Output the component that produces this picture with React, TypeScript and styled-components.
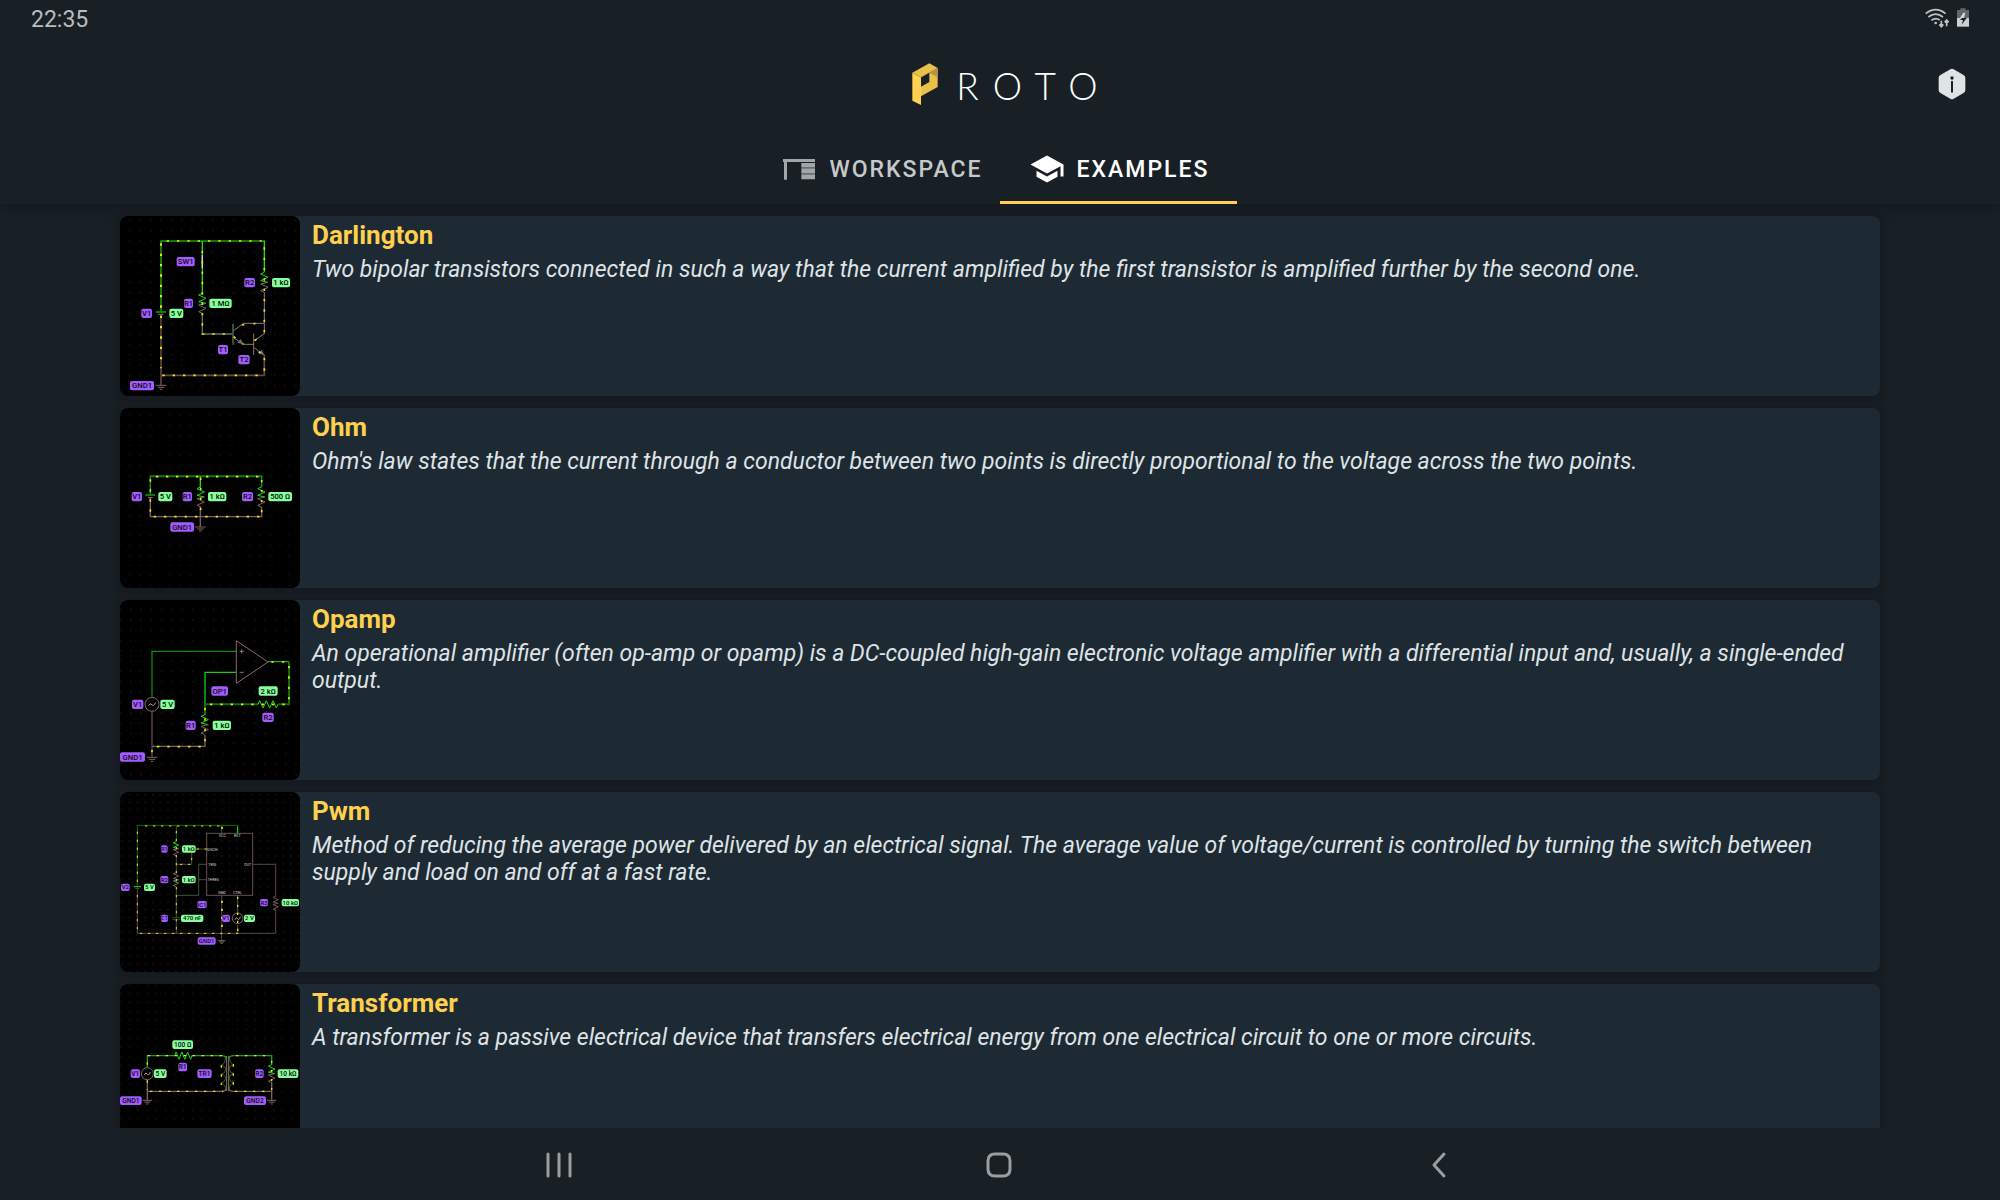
import React from "react";
import styled, { createGlobalStyle } from "styled-components";

const GlobalStyle = createGlobalStyle`
  * { box-sizing: border-box; }
  body { margin: 0; background: #181f25; }
  button { font: inherit; color: inherit; background: none; border: 0; padding: 0; }
`;

const Screen = styled.div`
  display: flex;
  flex-direction: column;
  height: 100vh;
  background: #181f25;
  color: #dfe3e6;
  font-family: Roboto, sans-serif;
`;

const StatusBar = styled.div`
  display: flex;
  align-items: center;
  justify-content: space-between;
  height: 36px;
  padding: 0 31px;
  font-size: 23px;
  color: #babcbe;
`;

const Clock = styled.span`
  padding-top: 4px;
  line-height: 36px;
`;

const StatusIcons = styled.div`
  display: flex;
  gap: 8px;
`;

const Header = styled.header`
  position: relative;
  z-index: 1;
  display: flex;
  flex-direction: column;
  background: #181f25;
  box-shadow: 0 2px 10px rgba(20, 16, 28, 0.4);
`;

const Toolbar = styled.div`
  display: grid;
  grid-template-columns: 1fr auto 1fr;
  align-items: center;
  height: 96px;
  padding: 0 30px;
`;

const Brand = styled.h1`
  grid-column: 2;
  display: flex;
  align-items: center;
  gap: 18px;
  margin: 0;
  padding-left: 24px;
  font-weight: 400;
`;

const Wordmark = styled.span`
  padding-top: 4px;
  font-family: Lato, sans-serif;
  font-size: 37px;
  font-weight: 300;
  line-height: 44px;
  letter-spacing: 14px;
  color: #fff;
`;

const InfoButton = styled.button`
  justify-self: end;
  width: 36px;
  height: 36px;
`;

const Tabs = styled.nav`
  display: grid;
  grid-template-columns: 237px 237px;
  justify-content: center;
  height: 72px;
`;

const Tab = styled.button<{ $active?: boolean }>`
  display: flex;
  align-items: center;
  justify-content: center;
  gap: 12px;
  padding: 4px 0 0 1px;
  border-bottom: 3px solid ${(p) => (p.$active ? "#ffd04d" : "transparent")};
  color: ${(p) => (p.$active ? "#ffffff" : "#c6c8ca")};
  font-size: 23px;
  font-weight: 500;
  letter-spacing: 2px;
`;

const TabLabel = styled.span`
  padding-top: 2px;
  line-height: 28px;
`;

const List = styled.main`
  display: flex;
  flex-direction: column;
  gap: 12px;
  flex: 1;
  min-height: 0;
  padding: 12px 6%;
  overflow: hidden auto;
  scrollbar-width: none;
`;

const Card = styled.article`
  display: flex;
  flex: none;
  height: 180px;
  border-radius: 8px;
  background: #1d2a34;
  box-shadow: 0 2px 8px rgba(20, 14, 26, 0.5);
`;

const Thumb = styled.svg`
  flex: none;
  width: 180px;
  height: 180px;
  border-radius: 8px;
  background: #000;
`;

const CardBody = styled.div`
  padding: 3px 12px;
`;

const Title = styled.h2`
  margin: 0;
  font-size: 26px;
  font-weight: 700;
  line-height: 32px;
  color: #ffd04d;
`;

const Description = styled.p`
  margin: 5px 0 0;
  font-size: 23px;
  font-style: italic;
  line-height: 27px;
  color: #dfe3e6;
`;

const NavBar = styled.footer`
  display: grid;
  grid-template-columns: repeat(3, 440px);
  justify-content: center;
  height: 72px;
  padding: 2px 2px 0 0;
`;

const NavButton = styled.button`
  display: flex;
  align-items: center;
  justify-content: center;
`;

/* ---------- circuit drawing parts ---------- */

const HOT = "#12b312";
const LIME = "#16e016";
const COLD = "#7d6060";
const DIM = "#56704f";

const Wire = ({ d, c = HOT, w = 4 }: { d: string; c?: string; w?: number }) => (
  <path d={d} fill="none" stroke={c} strokeWidth={w} />
);

const Flow = ({ d, gap = 31, at = 0, w = 5 }: { d: string; gap?: number; at?: number; w?: number }) => (
  <path d={d} fill="none" stroke="#f0e600" strokeWidth={w} strokeDasharray={`7 ${gap - 7}`} strokeDashoffset={-at} />
);

type ChipProps = { x: number; y: number; w: number; t: string; v?: boolean; h?: number; s?: number };
const Chip = ({ x, y, w, t, v, h = 28, s = 23 }: ChipProps) => (
  <g>
    <rect x={x} y={y - h / 2} width={w} height={h} rx={6} fill={v ? "#86ff9b" : "#a35cff"} />
    <text x={x + w / 2} y={y + s * 0.36} fontSize={s} fontWeight={500} textAnchor="middle" fill="#0c0c0c" fontFamily="Roboto, sans-serif">
      {t}
    </text>
  </g>
);

/* A vertical zigzag, live colour on its upper half and return colour on its lower half. */
const Resistor = ({ x, y, h = 60, a = 11, top = LIME, low = COLD }: { x: number; y: number; h?: number; a?: number; top?: string; low?: string }) => {
  const s = h / 12;
  return (
    <g>
      <Wire c={top} w={3} d={`M${x} ${y}l${-a} ${s}l${a * 2} ${s * 2}l${-a * 2} ${s * 2}l${a * 2} ${s}`} />
      <Wire c={low} w={3} d={`M${x + a} ${y + s * 6}l${-a * 2} ${s}l${a * 2} ${s * 2}l${-a * 2} ${s * 2}l${a} ${s}`} />
    </g>
  );
};

const FlatResistor = ({ x, y, w = 60 }: { x: number; y: number; w?: number }) => {
  const s = w / 12;
  return <Wire c={LIME} w={3} d={`M${x} ${y}l${s} -11l${s * 2} 22l${s * 2} -22l${s * 2} 22l${s * 2} -22l${s * 2} 22l${s} -11`} />;
};

const Ground = ({ x, y, k = 1 }: { x: number; y: number; k?: number }) => (
  <path
    d={`M${x - 16 * k} ${y}h${32 * k}M${x - 10 * k} ${y + 6 * k}h${20 * k}M${x - 4 * k} ${y + 12 * k}h${8 * k}`}
    stroke="#7d6460"
    strokeWidth={3}
  />
);

const Source = ({ x, y, r }: { x: number; y: number; r: number }) => (
  <g fill="none" stroke="#7d6868" strokeWidth={3}>
    <circle cx={x} cy={y} r={r} fill="#000" />
    <path d={`M${x - r / 2} ${y + 4}q${r / 4} -10 ${r / 2} -3t${r / 2} -6`} stroke="#b5a79d" />
  </g>
);

const Board = ({ id, top, pitch, x0, y0, label, children }: { id: string; top: number; pitch: number; x0: number; y0: number; label: string; children: React.ReactNode }) => (
  <Thumb viewBox={`30 ${top} 540 540`} role="img" aria-label={label}>
    <defs>
      <pattern id={id} x={x0 - 2} y={y0 - 2} width={pitch} height={pitch} patternUnits="userSpaceOnUse">
        <rect width={4} height={4} fill="#181818" />
      </pattern>
    </defs>
    <rect x={30} y={top} width={540} height={540} fill={`url(#${id})`} />
    {children}
  </Thumb>
);

const Darlington = () => (
  <Board id="g1" top={33} pitch={31} x0={60} y0={46} label="Darlington circuit">
    <Wire d="M153 320V108" c="#0b7d0b" w={6} />
    <Wire d="M151 108H464" c="#10a010" w={5} />
    <Wire d="M277 108V265M463 108V200" c={LIME} />
    <Wire d="M277 150V190" c="#d8d8e8" w={4} />
    <Wire d="M138 321H168" c="#10a010" w={5} />
    <Wire d="M145 328H160" c={COLD} />
    <Wire d="M153 330V540" c="#4c3a38" w={6} />
    <Wire d="M153 511H463V450" c="#654746" w={5} />
    <Wire d="M277 325V387H369" c="#5d7a5a" />
    <Wire d="M369 357V419" c="#3c4f3a" w={6} />
    <Wire d="M371 377L400 355H463V262M371 398L400 418H431M463 355V386L431 408" c="#8a8080" w={3} />
    <Wire d="M431 386V449M431 427L463 450" c="#8a7470" w={3} />
    <path d="M382 413L400 418L392 402ZM446 446L463 450L455 434Z" fill="#77706e" />
    <Resistor x={277} y={265} low="#6e706c" />
    <Resistor x={463} y={202} low="#6e706c" />
    <Flow d="M153 115V490" w={6} />
    <Flow d="M170 108H455" />
    <Flow d="M277 138V387H345" />
    <Flow d="M463 127V385" />
    <Flow d="M157 511H455" />
    <Flow d="M463 500V450" at={3} />
    <Flow d="M371 395L400 418" gap={34} />
    <Flow d="M396 360L440 355" gap={34} />
    <Flow d="M440 403L431 408M446 440L463 450" gap={34} />
    <Ground x={153} y={541} />
    <Chip x={200} y={170} w={54} t="SW1" />
    <Chip x={222} y={295} w={27} t="R1" />
    <Chip x={403} y={233} w={32} t="R2" />
    <Chip x={94} y={325} w={32} t="V1" />
    <Chip x={324} y={434} w={30} t="T1" />
    <Chip x={385} y={464} w={34} t="T2" />
    <Chip x={60} y={542} w={72} t="GND1" />
    <Chip v x={178} y={325} w={42} t="5 V" />
    <Chip v x={298} y={295} w={67} t="1 MΩ" />
    <Chip v x={486} y={233} w={54} t="1 kΩ" />
  </Board>
);

const Ohm = () => (
  <Board id="g2" top={24} pitch={30} x0={60} y0={46} label="Ohm circuit">
    <Wire d="M119 229H457" c="#0b7d0b" w={6} />
    <Wire d="M121 229V284M106 285H135M455 229V262" c="#10a010" />
    <Wire d="M271 229V262" c={LIME} />
    <Wire d="M114 293H128M121 293V350H455V320M271 320V380" c={COLD} />
    <Resistor x={272} y={261} />
    <Resistor x={454} y={261} />
    <Flow d="M138 230H450" gap={30} />
    <Flow d="M131 350H450" gap={31} />
    <Flow d="M121 238V345" gap={30} />
    <Flow d="M272 233V340" gap={30} />
    <Flow d="M455 240V340" gap={30} />
    <Ground x={271} y={381} />
    <Chip x={65} y={290} w={31} t="V1" />
    <Chip x={218} y={290} w={28} t="R1" />
    <Chip x={396} y={290} w={33} t="R2" />
    <Chip x={181} y={381} w={71} t="GND1" />
    <Chip v x={145} y={290} w={42} t="5 V" />
    <Chip v x={294} y={290} w={55} t="1 kΩ" />
    <Chip v x={475} y={290} w={71} t="500 Ω" />
  </Board>
);

const Opamp = () => (
  <Board id="g3" top={30} pitch={31} x0={62} y0={58} label="Opamp circuit">
    <Wire d="M126 320V184H379" c="#108a10" />
    <Wire d="M285 342V247H379" c="#18c818" />
    <Wire d="M285 342V375M474 215H537" c="#18b018" />
    <Wire d="M285 343H445M505 343H537V215" c="#0b700b" w={6} />
    <path d="M379 152V280L474 216Z" fill="none" stroke="#8a6c68" strokeWidth={3} />
    <path d="M389 184h12M395 178v12M389 247h12" stroke="#8a7c78" strokeWidth={3} />
    <Wire d="M126 364V500" c="#4c3a38" w={5} />
    <Wire d="M126 469H285V435" c={COLD} />
    <Resistor x={284} y={374} />
    <FlatResistor x={444} y={343} />
    <Source x={126} y={343} r={21} />
    <Flow d="M484 216H530" gap={32} />
    <Flow d="M537 228V330" />
    <Flow d="M300 343H545" />
    <Flow d="M285 354V460" />
    <Flow d="M141 470H280" />
    <Flow d="M126 480V490" />
    <Ground x={126} y={502} />
    <Chip x={304} y={303} w={50} t="OP1" />
    <Chip x={66} y={343} w={34} t="V1" />
    <Chip x={227} y={406} w={30} t="R1" />
    <Chip x={457} y={382} w={34} t="R2" />
    <Chip x={30} y={501} w={75} t="GND1" />
    <Chip v x={151} y={343} w={43} t="5 V" />
    <Chip v x={446} y={303} w={57} t="2 kΩ" />
    <Chip v x={308} y={406} w={55} t="1 kΩ" />
  </Board>
);

const Pin = ({ x, y, t }: { x: number; y: number; t: string }) => (
  <text x={x} y={y} fontSize={11} textAnchor="middle" fill="#dadada" fontFamily="Roboto, sans-serif">
    {t}
  </text>
);

const Pwm = () => (
  <Board id="g4" top={21} pitch={23} x0={59} y0={52} label="Pwm circuit">
    <Wire d="M82 305V121H383V146M199 121V170M335 121V146" c="#0b6e0b" w={3} />
    <Wire d="M383 124V146M71 305H93" c={LIME} w={3} />
    <Wire d="M76 310H88M82 310V445H497V375M497 335V238H428M335 331V470M383 420V445" c="#5a4543" w={3} />
    <Wire d="M199 210V262M199 305V398M199 238H245V192H290" c="#4a4a3a" w={3} />
    <Wire d="M199 331H266V238H290M266 284H290" c="#3f503f" w={3} />
    <Wire d="M187 398H211M187 404H211M199 404V445" c={DIM} w={2} />
    <Wire d="M383 331V384" c="#3f5f3f" w={3} />
    <rect x={290} y={145} width={138} height={186} fill="none" stroke="#6a4f4d" strokeWidth={3} />
    <Resistor x={198} y={170} h={42} a={8} />
    <Resistor x={198} y={263} h={42} a={8} top="#6f6660" low="#5a7a58" />
    <Resistor x={497} y={334} h={42} a={8} top="#6f5452" low="#6f5452" />
    <Source x={383} y={400} r={16} />
    <Flow d="M82 140V300M82 330V440" gap={24} w={3} />
    <Flow d="M105 123H340" gap={24} w={3} />
    <Flow d="M199 138V440" gap={24} w={3} />
    <Flow d="M90 445H385" gap={24} w={3} />
    <Flow d="M210 238H245V192H290" gap={24} w={3} />
    <Flow d="M336 125V135M336 347V440" gap={24} w={5} />
    <Flow d="M383 335V440" gap={24} w={4} />
    <Ground x={335} y={467} k={0.7} />
    <Pin x={337} y={157} t="VCC" />
    <Pin x={382} y={157} t="RST" />
    <Pin x={307} y={197} t="DISCH" />
    <Pin x={307} y={242} t="TRIG" />
    <Pin x={310} y={288} t="THRES" />
    <Pin x={413} y={242} t="OUT" />
    <Pin x={336} y={326} t="GND" />
    <Pin x={382} y={326} t="CTRL" />
    <Chip h={22} s={18} x={153} y={192} w={20} t="R1" />
    <Chip h={22} s={18} x={151} y={284} w={24} t="R2" />
    <Chip h={22} s={18} x={33} y={307} w={26} t="V2" />
    <Chip h={22} s={18} x={262} y={359} w={28} t="IC1" />
    <Chip h={22} s={18} x={153} y={400} w={21} t="C1" />
    <Chip h={22} s={18} x={336} y={400} w={24} t="V1" />
    <Chip h={22} s={18} x={450} y={353} w={24} t="R3" />
    <Chip h={22} s={18} x={263} y={468} w={54} t="GND1" />
    <Chip v h={22} s={18} x={216} y={192} w={41} t="1 kΩ" />
    <Chip v h={22} s={18} x={216} y={284} w={41} t="1 kΩ" />
    <Chip v h={22} s={18} x={102} y={307} w={33} t="5 V" />
    <Chip v h={22} s={18} x={213} y={400} w={67} t="470 nF" />
    <Chip v h={22} s={18} x={402} y={400} w={33} t="2 V" />
    <Chip v h={22} s={18} x={515} y={353} w={52} t="10 kΩ" />
  </Board>
);

const Transformer = () => (
  <Board id="g5" top={27} pitch={27} x0={58} y0={55} label="Transformer circuit">
    <Wire d="M112 278V242H194M245 242H335Q346 242 348 249M357 249Q360 242 370 242H485V270" c="#14a014" />
    <Wire d="M112 314V376M110 349H335Q346 349 348 343M357 343Q360 349 370 349H485M485 322V376" c={COLD} />
    <path d="M350 243V348M356 243V348" stroke="#8f6f6c" strokeWidth={3} />
    <path d="M347 249q-3 20 -14 22q14 2 14 13q-1 12 -14 14q14 2 14 12q-1 12 -14 14q14 4 14 20" fill="none" stroke="#5a8a45" strokeWidth={2} />
    <path d="M358 249q3 18 14 20q-14 2 -14 14q1 11 14 13q-14 2 -14 13q1 12 14 14q-14 4 -14 20" fill="none" stroke="#3f9a35" strokeWidth={2} />
    <FlatResistor x={194} y={242} w={52} />
    <Resistor x={485} y={269} h={54} a={10} />
    <Source x={112} y={296} r={18} />
    <Flow d="M113 242H340M378 242H480" gap={27} w={4} />
    <Flow d="M120 349H340M375 349H480" gap={27} w={4} />
    <Flow d="M112 262V275M112 316V345" gap={27} w={4} />
    <Flow d="M485 258V345" gap={27} w={4} />
    <Flow d="M334 271V330" gap={27} w={4} />
    <Flow d="M370 268V330" gap={27} w={4} />
    <Ground x={112} y={376} k={0.9} />
    <Ground x={485} y={376} k={0.9} />
    <Chip h={26} s={20} x={205} y={276} w={26} t="R1" />
    <Chip h={26} s={20} x={62} y={296} w={28} t="V1" />
    <Chip h={26} s={20} x={262} y={296} w={43} t="TR1" />
    <Chip h={26} s={20} x={435} y={296} w={26} t="R2" />
    <Chip h={26} s={20} x={30} y={377} w={65} t="GND1" />
    <Chip h={26} s={20} x={402} y={377} w={66} t="GND2" />
    <Chip v h={26} s={20} x={187} y={209} w={62} t="100 Ω" />
    <Chip v h={26} s={20} x={132} y={296} w={38} t="5 V" />
    <Chip v h={26} s={20} x={503} y={296} w={62} t="10 kΩ" />
  </Board>
);

const examples = [
  {
    title: "Darlington",
    Picture: Darlington,
    text: "Two bipolar transistors connected in such a way that the current amplified by the first transistor is amplified further by the second one.",
  },
  {
    title: "Ohm",
    Picture: Ohm,
    text: "Ohm's law states that the current through a conductor between two points is directly proportional to the voltage across the two points.",
  },
  {
    title: "Opamp",
    Picture: Opamp,
    text: "An operational amplifier (often op-amp or opamp) is a DC-coupled high-gain electronic voltage amplifier with a differential input and, usually, a single-ended output.",
  },
  {
    title: "Pwm",
    Picture: Pwm,
    text: "Method of reducing the average power delivered by an electrical signal. The average value of voltage/current is controlled by turning the switch between supply and load on and off at a fast rate.",
  },
  {
    title: "Transformer",
    Picture: Transformer,
    text: "A transformer is a passive electrical device that transfers electrical energy from one electrical circuit to one or more circuits.",
  },
];

/* ---------- icons ---------- */

const WifiIcon = () => (
  <svg width="24" height="20" viewBox="132 21 72 60" fill="none" stroke="#c0c2c4" strokeWidth="5" aria-hidden="true">
    <path d="M134 38Q164 14 194 38M142 48Q164 31 186 48M151 58Q164 48 176 57" />
    <circle cx="164" cy="66" r="4" fill="#c0c2c4" stroke="none" />
    <path d="M181 59V75M175 70L181 77L187 70M197 76V59M191 64L197 57L203 64" strokeWidth="5" />
  </svg>
);

const BatteryIcon = () => (
  <svg width="12" height="20" viewBox="231 21 36 60" aria-hidden="true">
    <path d="M241 22H257V27H267V51H231V27H241Z" fill="#62676c" />
    <path d="M231 51H267V77H231Z" fill="#cdcfd0" />
    <path d="M250 35L238 54H247V51H252L256 35Z" fill="#d4d6d7" />
    <path d="M246 51H260L245 71L249 57H240Z" fill="#181f25" />
  </svg>
);

const LogoIcon = () => (
  <svg width="26" height="42" viewBox="97 67 78 126" aria-hidden="true">
    <path d="M98 96L149 68L174 82L124 110Z" fill="#e8c04b" />
    <path d="M149 96L174 82V139L124 167V138L149 124Z" fill="#e8c04b" />
    <path d="M149 96L174 82V110Z" fill="#b3963f" />
    <path d="M98 96L124 110V193L98 180Z" fill="#ffd24f" />
    <path d="M98 96L124 110L149 96" fill="none" stroke="#a88d3c" strokeWidth="1" />
  </svg>
);

const InfoIcon = () => (
  <svg width="36" height="36" viewBox="163 198 108 108" aria-hidden="true">
    <path d="M212 208Q217 205 222 208L253 226Q257 229 257 234V270Q257 275 253 278L222 296Q217 299 212 296L181 278Q177 275 177 270V234Q177 229 181 226Z" fill="#dfe3e4" />
    <circle cx="217" cy="234" r="5" fill="#181f25" />
    <path d="M217 245V275" stroke="#181f25" strokeWidth="6" strokeLinecap="round" />
  </svg>
);

const DeskIcon = () => (
  <svg width="36" height="36" viewBox="63 60 108 108" fill="#a3a6a8" aria-hidden="true">
    <path d="M69 84H165V93H69ZM72 93H81V146H72ZM124 96H165V108H124ZM124 112H165V126H124ZM124 130H165V145H124Z" />
    <path d="M124 108H165V112H124ZM124 126H165V130H124Z" fill="#6a6e72" />
  </svg>
);

const SchoolIcon = () => (
  <svg width="36" height="36" viewBox="0 0 24 24" fill="currentColor" aria-hidden="true">
    <path d="M5 13.18v4L12 21l7-3.82v-4L12 17l-7-3.82zM12 3L1 9l11 6 9-4.91V17h2V9L12 3z" />
  </svg>
);

const NavIcon = ({ d }: { d: string }) => (
  <svg width="32" height="32" viewBox="0 0 32 32" fill="none" stroke="#9b9ea1" strokeWidth="3" strokeLinecap="round" strokeLinejoin="round" aria-hidden="true">
    <path d={d} />
  </svg>
);

export default function App() {
  return (
    <Screen>
      <GlobalStyle />
      <Header>
        <StatusBar>
          <Clock>22:35</Clock>
          <StatusIcons>
            <WifiIcon />
            <BatteryIcon />
          </StatusIcons>
        </StatusBar>
        <Toolbar>
          <Brand aria-label="Proto">
            <LogoIcon />
            <Wordmark>ROTO</Wordmark>
          </Brand>
          <InfoButton aria-label="About">
            <InfoIcon />
          </InfoButton>
        </Toolbar>
        <Tabs>
          <Tab>
            <DeskIcon />
            <TabLabel>WORKSPACE</TabLabel>
          </Tab>
          <Tab $active aria-current="page">
            <SchoolIcon />
            <TabLabel>EXAMPLES</TabLabel>
          </Tab>
        </Tabs>
      </Header>
      <List>
        {examples.map(({ title, text, Picture }) => (
          <Card key={title}>
            <Picture />
            <CardBody>
              <Title>{title}</Title>
              <Description>{text}</Description>
            </CardBody>
          </Card>
        ))}
      </List>
      <NavBar>
        <NavButton aria-label="Recent apps">
          <NavIcon d="M5 5V27M16 5V27M27 5V27" />
        </NavButton>
        <NavButton aria-label="Home">
          <NavIcon d="M12 5H20Q27 5 27 12V20Q27 27 20 27H12Q5 27 5 20V12Q5 5 12 5Z" />
        </NavButton>
        <NavButton aria-label="Back">
          <NavIcon d="M21 5L11 16L21 27" />
        </NavButton>
      </NavBar>
    </Screen>
  );
}
